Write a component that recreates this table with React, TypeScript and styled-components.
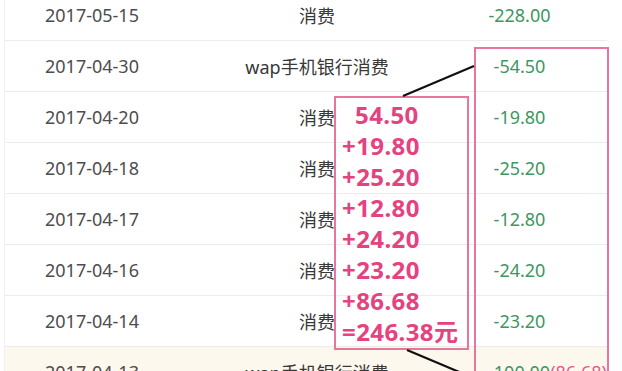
import React from 'react'
import styled, { createGlobalStyle } from 'styled-components'

const GlobalStyle = createGlobalStyle`
    html, body {
        margin: 0;
        padding: 0;
        background: #fff;
        overflow: hidden;
    }
    body {
        font-family: "Noto Sans", "Noto Sans CJK SC", sans-serif;
    }
`

const Page = styled.div`
    position: relative;
    width: 622px;
    height: 371px;
    overflow: hidden;
`

const Table = styled.div`
    width: 602px;
    margin: -10px 0 0 4px;
    border-left: 1px solid #f1f1f1;
`

const Row = styled.div<{ $highlight?: boolean }>`
    display: grid;
    grid-template-columns: 205px 214px 1fr;
    align-items: center;
    height: 50px;
    border-bottom: 1px solid #ececec;
    background: ${p => (p.$highlight ? '#fdf8ee' : '#fff')};
    font-size: 18px;
`

const DateCell = styled.div`
    padding-left: 40px;
    color: #4d4d4d;
`

const DescCell = styled.div`
    text-align: center;
    color: #383838;
`

const AmountCell = styled.div<{ $shift?: number }>`
    text-align: center;
    padding-left: ${p => 8 + (p.$shift ?? 0)}px;
    color: #3d975f;
    white-space: nowrap;
`

const Extra = styled.span`
    color: #e35a8c;
`

const Frame = styled.div<{ $left: number; $top: number; $width: number; $height: number }>`
    position: absolute;
    left: ${p => p.$left}px;
    top: ${p => p.$top}px;
    width: ${p => p.$width}px;
    height: ${p => p.$height}px;
    border: 2px solid #e8759c;
    box-sizing: border-box;
`

const SumList = styled.div`
    padding: 1px 0 0 6px;
    display: flex;
    flex-direction: column;
`

const SumLine = styled.div<{ $indent?: boolean }>`
    height: 31px;
    line-height: 31px;
    padding-left: ${p => (p.$indent ? '13px' : '0')};
    font-size: 24px;
    font-weight: 700;
    letter-spacing: 0.4px;
    color: #e4437f;
    white-space: nowrap;
`

const Connectors = styled.svg`
    position: absolute;
    left: 0;
    top: 0;
    pointer-events: none;
`

const rows = [
    { date: '2017-05-15', desc: '消费', amount: '-228.00' },
    { date: '2017-04-30', desc: 'wap手机银行消费', amount: '-54.50' },
    { date: '2017-04-20', desc: '消费', amount: '-19.80' },
    { date: '2017-04-18', desc: '消费', amount: '-25.20' },
    { date: '2017-04-17', desc: '消费', amount: '-12.80' },
    { date: '2017-04-16', desc: '消费', amount: '-24.20' },
    { date: '2017-04-14', desc: '消费', amount: '-23.20' },
]

const sums = ['54.50', '+19.80', '+25.20', '+12.80', '+24.20', '+23.20', '+86.68', '=246.38元']

const App = () => {
    return (
        <Page>
            <GlobalStyle />
            <Table>
                {rows.map(r => (
                    <Row key={r.date}>
                        <DateCell>{r.date}</DateCell>
                        <DescCell>{r.desc}</DescCell>
                        <AmountCell>{r.amount}</AmountCell>
                    </Row>
                ))}
                <Row $highlight>
                    <DateCell>2017-04-13</DateCell>
                    <DescCell>wap手机银行消费</DescCell>
                    <AmountCell $shift={56}>
                        -100.00<Extra>(86.68)</Extra>
                    </AmountCell>
                </Row>
            </Table>

            <Frame $left={474} $top={47} $width={135} $height={340} />
            <Frame $left={334} $top={96} $width={135} $height={254}>
                <SumList>
                    {sums.map((s, i) => (
                        <SumLine key={i} $indent={i === 0}>{s}</SumLine>
                    ))}
                </SumList>
            </Frame>

            <Connectors width="622" height="371">
                <line x1="474" y1="66" x2="403" y2="96" stroke="#111" strokeWidth="2.2" />
                <line x1="407" y1="350" x2="464" y2="374" stroke="#111" strokeWidth="2.2" />
            </Connectors>
        </Page>
    )
}

export default App
